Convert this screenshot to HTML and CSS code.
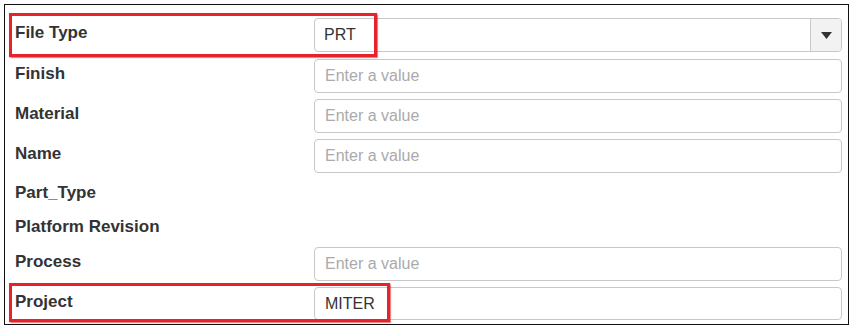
FILE: index.html
```html
<!DOCTYPE html>
<html lang="en">
<head>
<meta charset="utf-8">
<title>Attributes</title>
<link rel="stylesheet" href="styles.css">
</head>
<body>
<div class="panel">
  <div class="row first">
    <div class="label">File Type</div>
    <div class="field select">
      <span class="value">PRT</span>
      <span class="btn"><svg width="11" height="7" viewBox="0 0 11 7"><path d="M0 0H11L5.5 7Z" fill="#333"/></svg></span>
    </div>
  </div>
  <div class="row">
    <div class="label">Finish</div>
    <div class="field"><span class="ph">Enter a value</span></div>
  </div>
  <div class="row">
    <div class="label">Material</div>
    <div class="field"><span class="ph">Enter a value</span></div>
  </div>
  <div class="row">
    <div class="label">Name</div>
    <div class="field"><span class="ph">Enter a value</span></div>
  </div>
  <div class="row empty">
    <div class="label">Part_Type</div>
  </div>
  <div class="row empty">
    <div class="label">Platform Revision</div>
  </div>
  <div class="row">
    <div class="label">Process</div>
    <div class="field"><span class="ph">Enter a value</span></div>
  </div>
  <div class="row last">
    <div class="label">Project</div>
    <div class="field"><span class="value">MITER</span></div>
  </div>
  <div class="mark mark-type"></div>
  <div class="mark mark-project"></div>
</div>
</body>
</html>
```
FILE: styles.css
```css
html, body {
  margin: 0;
  padding: 0;
  background: #fff;
}
body {
  font-family: "Liberation Sans", Arial, sans-serif;
}
.panel {
  position: relative;
  box-sizing: border-box;
  width: 845px;
  height: 321px;
  margin: 4px;
  border: 1px solid #111;
  padding: 13px 6px 0 10px;
}
.row {
  display: grid;
  grid-template-columns: 299px 1fr;
  min-height: 34px;
}
.row.first .field {
  margin-bottom: 7px;
}
.label {
  font-size: 17px;
  font-weight: bold;
  color: #333;
  line-height: 20px;
  padding-top: 5px;
}
.row.empty .label {
  padding-top: 4px;
}
.field {
  box-sizing: border-box;
  height: 34px;
  margin-bottom: 6px;
  border: 1px solid #c8c8c8;
  border-radius: 4px;
  display: flex;
  align-items: center;
  padding-left: 10px;
  font-size: 16px;
  background: #fff;
}
.row.last .field {
  height: 33px;
  margin-bottom: 0;
}
.value {
  color: #333;
}
.ph {
  color: #aaaaaa;
}
.select {
  padding-left: 9px;
  padding-right: 0;
  overflow: hidden;
}
.select .value {
  flex: 1;
}
.btn {
  width: 31px;
  height: 100%;
  box-sizing: border-box;
  border-left: 1px solid #c8c8c8;
  background: #f2f2f2;
  display: flex;
  align-items: center;
  justify-content: center;
}
.btn svg {
  display: block;
  margin-left: 1px;
}
.mark {
  position: absolute;
  box-sizing: border-box;
  border: 3px solid #e6232a;
  box-shadow: 0 0 1px 0.5px rgba(230, 35, 42, 0.5), 1px 1px 2px rgba(0, 0, 0, 0.15);
  pointer-events: none;
}
.mark-type {
  left: 4px;
  top: 8px;
  width: 368px;
  height: 44px;
}
.mark-project {
  left: 4px;
  top: 278px;
  width: 381px;
  height: 39px;
}
```
